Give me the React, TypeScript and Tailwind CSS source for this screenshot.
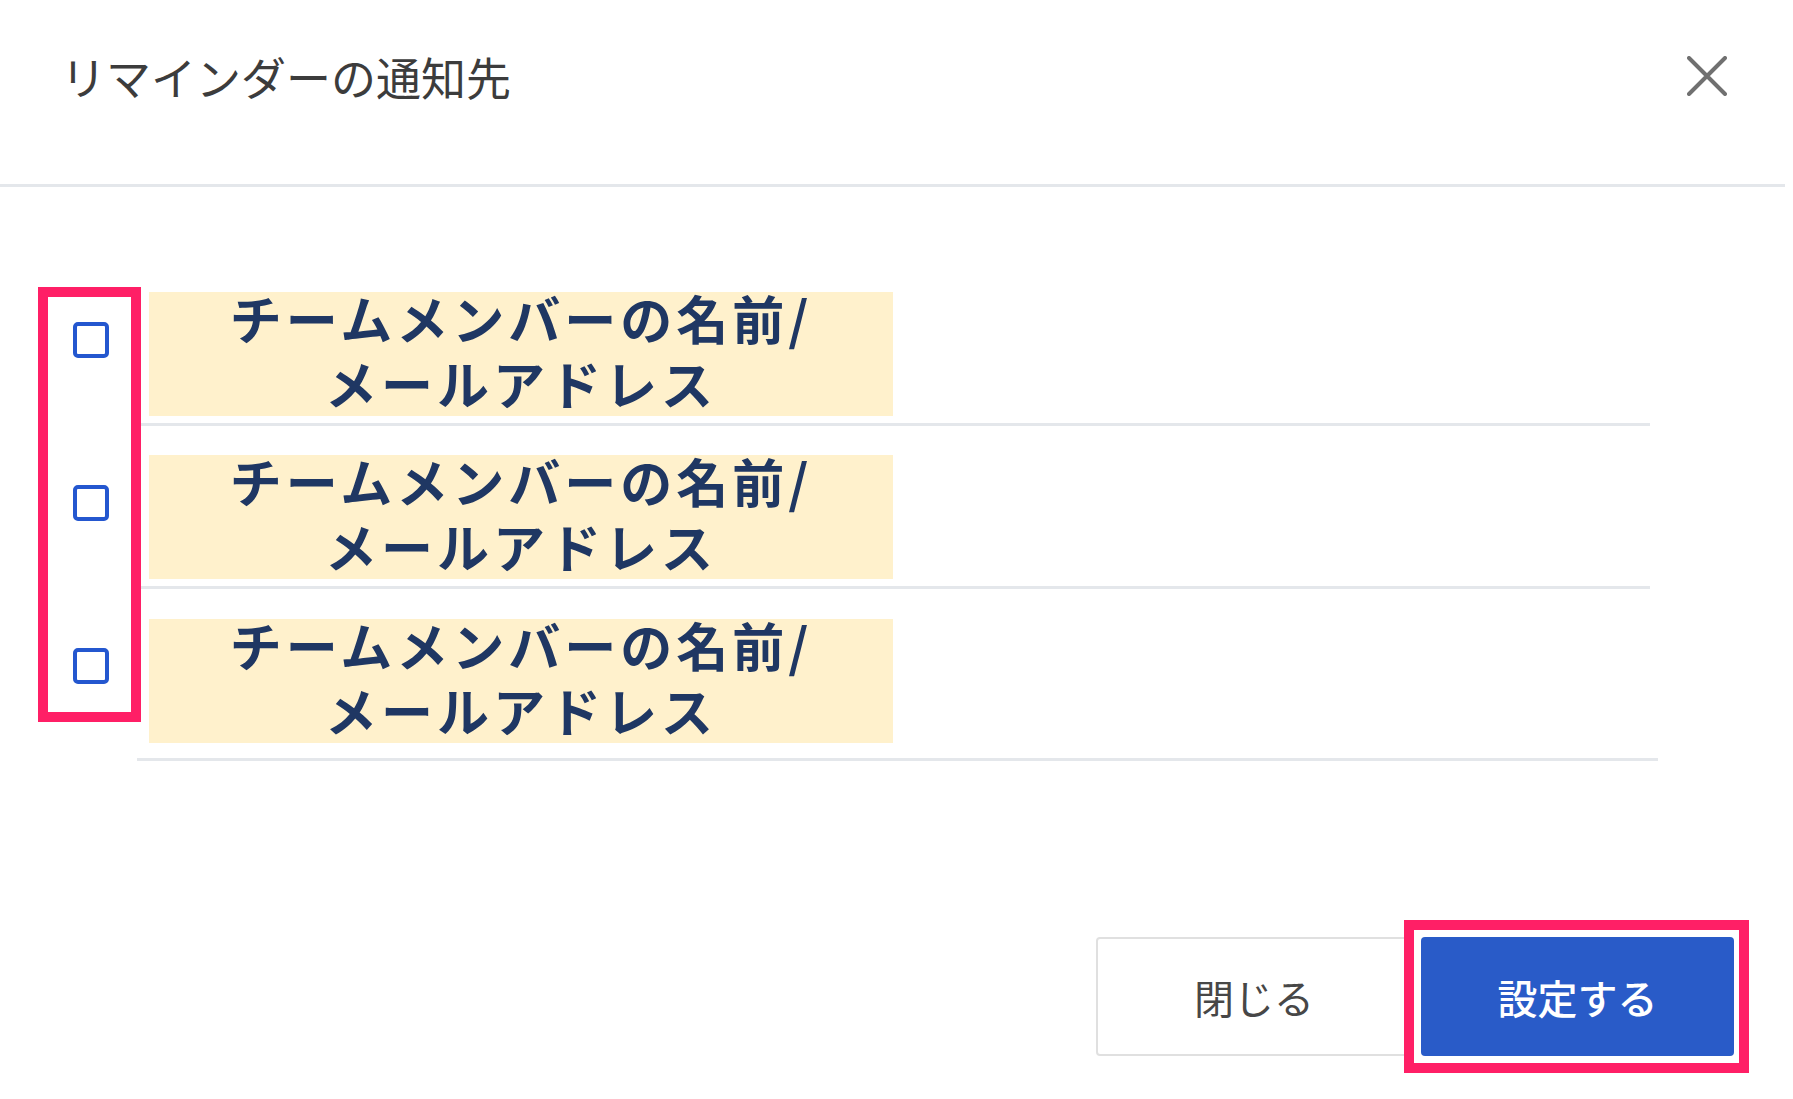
import { useState } from "react";

const recipients = [
  { id: "member-1", line1: "チームメンバーの名前/", line2: "メールアドレス" },
  { id: "member-2", line1: "チームメンバーの名前/", line2: "メールアドレス" },
  { id: "member-3", line1: "チームメンバーの名前/", line2: "メールアドレス" },
];

export default function App() {
  const [checked, setChecked] = useState<Record<string, boolean>>({});

  return (
    <div className="h-[1099px] w-full overflow-hidden bg-white font-['Noto_Sans_CJK_JP',sans-serif]">
      <header className="mr-2 h-[187px] border-b-[3px] border-[#e4e7eb]">
        <div className="flex h-[152px] items-center justify-between pl-[61px] pr-[58px]">
          <h2 className="text-[45px] font-normal leading-none text-[#3c3c3c]">リマインダーの通知先</h2>
          <button type="button" aria-label="閉じる" className="flex h-[40px] w-[40px] items-center justify-center">
            <svg width="40" height="40" viewBox="0 0 40 40" fill="none">
              <path d="M2 2L38 38M38 2L2 38" stroke="#707070" strokeWidth="4" strokeLinecap="round" />
            </svg>
          </button>
        </div>
      </header>

      <div className="relative ml-[48px] mt-[76px] w-[1602px]">
        {recipients.map((item, index) => {
          const last = index === recipients.length - 1;
          return (
            <div key={item.id} className="flex">
              <div className="w-[89px] pl-[25px] pt-[59px]">
                <button
                  type="button"
                  aria-checked={!!checked[item.id]}
                  role="checkbox"
                  onClick={() => setChecked((prev) => ({ ...prev, [item.id]: !prev[item.id] }))}
                  className="block h-[36px] w-[36px] rounded-[5px] border-4 border-[#2457cf] bg-white"
                />
              </div>
              <div
                className={
                  last
                    ? "-mr-2 flex-1 border-b-[3px] border-[#e4e7eb] pb-[15px] pl-[12px] pt-[30px]"
                    : "flex-1 border-b-[3px] border-[#e4e7eb] pb-[7px] pl-[12px] pt-[29px]"
                }
              >
                <div className="flex h-[124px] w-[744px] items-center justify-center bg-[#fff1cc] pb-[8px]">
                  <p className="text-center text-[52px] font-bold leading-[65px] tracking-[4px] text-[#1f3763]">
                    {item.line1}
                    <br />
                    {item.line2}
                  </p>
                </div>
              </div>
            </div>
          );
        })}
        <span className="pointer-events-none absolute left-[-10px] top-[24px] h-[435px] w-[103px] border-[10px] border-[#ff1f66]" />
      </div>

      <div className="mt-[176px] flex justify-end pr-[59px]">
        <button
          type="button"
          className="h-[119px] w-[316px] rounded-[4px] border-2 border-[#e0e0e0] bg-white text-[40px] text-[#474747]"
        >
          閉じる
        </button>
        <div className="relative ml-[9px]">
          <button
            type="button"
            className="h-[119px] w-[313px] rounded-[4px] bg-[#295bc8] text-[40px] font-medium text-white"
          >
            設定する
          </button>
          <span className="pointer-events-none absolute -bottom-[17px] -left-[17px] -right-[15px] -top-[17px] border-[10px] border-[#ff1f66]" />
        </div>
      </div>
    </div>
  );
}
